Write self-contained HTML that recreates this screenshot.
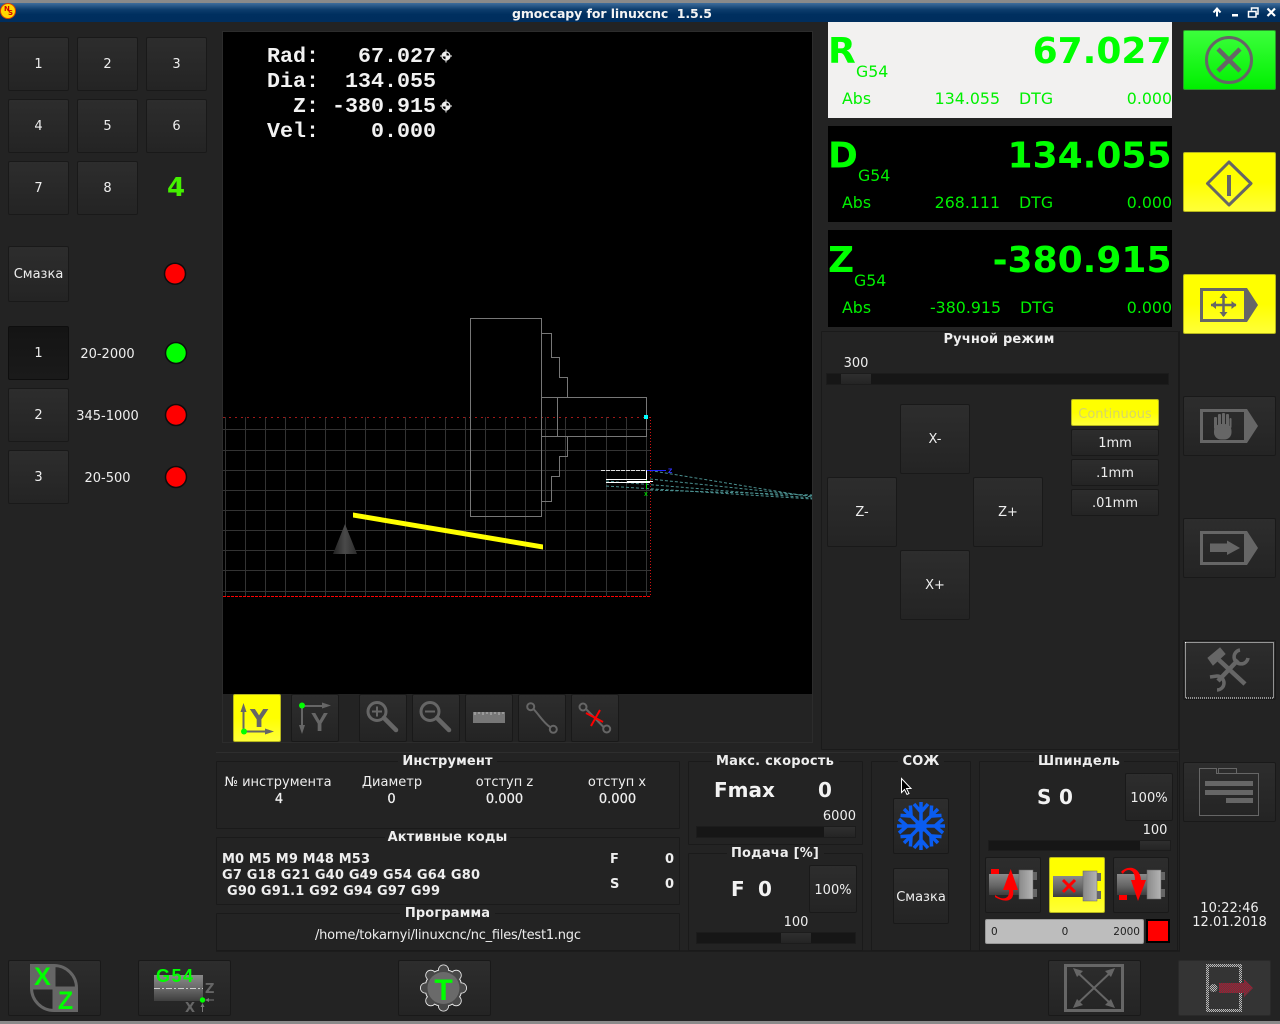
<!DOCTYPE html>
<html lang="ru"><head><meta charset="utf-8"><title>gmoccapy for linuxcnc</title>
<style>
html,body{margin:0;padding:0;background:#232323}
body{width:1280px;height:1024px;overflow:hidden;position:relative;font-family:"DejaVu Sans","Liberation Sans",sans-serif;font-size:13px;color:#eee}
.b{position:absolute;box-sizing:border-box;border:1px solid #191919;border-radius:2px;background:linear-gradient(#2d2d2d,#242424);display:flex;align-items:center;justify-content:center;color:#eee;font-size:13px}
.y{background:linear-gradient(#ffff00 50%,#ffff38);border:1px solid #b5b51e;color:#d6d66a}
.g{background:linear-gradient(#3cff3c,#00f000);border:1px solid #2a9a2a}
.f{position:absolute;box-sizing:border-box;border:1px solid #1a1a1a;border-radius:1px}
.tr{position:absolute;background:#161616;box-sizing:border-box;border:1px solid #1c1c1c}
.h{position:absolute;top:0;bottom:0;background:linear-gradient(#2f2f2f,#242424)}
.dro{position:absolute;left:828px;width:344px;background:#000}
svg{position:absolute;left:0;top:0;pointer-events:none}
.s{font-size:13px;fill:#eee}
.l{font-size:13px;font-weight:bold;fill:#eee;letter-spacing:.15px}
.d{font-size:15.8px;fill:#00f000}
.big{font-size:36px;font-weight:bold;fill:#00ff00}
.v{font-size:20px;font-weight:bold;fill:#f2f2f2}
.m{font-family:"Liberation Mono",monospace;font-size:21.67px;font-weight:bold;fill:#f2f2f2}
.p1{padding-top:2px}
.p2{padding-top:4px}
</style></head><body>
<div style="position:absolute;left:0;top:0;width:1280px;height:3px;background:#8a8a8a"></div>
<div style="position:absolute;left:0;top:3px;width:1280px;height:19px;background:linear-gradient(#3f6d9c,#0c3c6c 35%,#002f5f 60%,#002e5e)"></div>
<div style="position:absolute;left:0;top:1021px;width:1280px;height:3px;background:#8a8a8a"></div>
<div style="position:absolute;left:216px;top:950px;width:964px;height:2px;background:#1c1c1c"></div>
<div style="position:absolute;left:216px;top:752px;width:964px;height:1px;background:#2e2e2e"></div>
<div style="position:absolute;left:1179px;top:331px;width:1px;height:620px;background:#1a1a1a"></div>
<div style="position:absolute;left:222px;top:31px;width:591px;height:712px;box-sizing:border-box;border:1px solid #2c2c2c"></div>
<div style="position:absolute;left:223px;top:32px;width:589px;height:662px;background:#000"></div>

<div class="b" style="left:8px;top:37px;width:61px;height:54px">1</div>
<div class="b" style="left:77px;top:37px;width:61px;height:54px">2</div>
<div class="b" style="left:146px;top:37px;width:61px;height:54px">3</div>
<div class="b" style="left:8px;top:99px;width:61px;height:54px">4</div>
<div class="b" style="left:77px;top:99px;width:61px;height:54px">5</div>
<div class="b" style="left:146px;top:99px;width:61px;height:54px">6</div>
<div class="b" style="left:8px;top:161px;width:61px;height:54px">7</div>
<div class="b" style="left:77px;top:161px;width:61px;height:54px">8</div>
<div class="b" style="left:8px;top:246px;width:61px;height:56px">Смазка</div>
<div class="b" style="left:8px;top:326px;width:61px;height:54px;background:linear-gradient(#141414,#1a1a1a);border-color:#0e0e0e">1</div>
<div class="b" style="left:8px;top:388px;width:61px;height:54px">2</div>
<div class="b" style="left:8px;top:450px;width:61px;height:54px">3</div>

<div class="dro" style="top:22px;height:96px;background:#f2f1f0"></div>
<div class="dro" style="top:126px;height:96px"></div>
<div class="dro" style="top:230px;height:97px"></div>

<div class="b g" style="left:1183px;top:30px;width:93px;height:60px"></div>
<div class="b y" style="left:1183px;top:152px;width:93px;height:60px"></div>
<div class="b y" style="left:1183px;top:274px;width:93px;height:60px"></div>
<div class="b" style="left:1183px;top:396px;width:93px;height:60px"></div>
<div class="b" style="left:1183px;top:518px;width:93px;height:60px"></div>
<div class="b" style="left:1183px;top:640px;width:93px;height:60px"></div>
<div class="b" style="left:1183px;top:762px;width:93px;height:60px"></div>

<div class="f" style="left:821px;top:331px;width:358px;height:419px"></div>
<div class="tr" style="left:826px;top:373px;width:343px;height:12px"><div class="h" style="left:14px;width:30px"></div></div>
<div class="b" style="left:900px;top:404px;width:70px;height:70px">X-</div>
<div class="b" style="left:827px;top:477px;width:70px;height:70px">Z-</div>
<div class="b" style="left:973px;top:477px;width:70px;height:70px">Z+</div>
<div class="b" style="left:900px;top:550px;width:70px;height:70px">X+</div>
<div class="b y p2" style="left:1071px;top:399px;width:88px;height:27px">Continuous</div>
<div class="b p1" style="left:1071px;top:429px;width:88px;height:27px">1mm</div>
<div class="b p1" style="left:1071px;top:459px;width:88px;height:27px">.1mm</div>
<div class="b p1" style="left:1071px;top:489px;width:88px;height:27px">.01mm</div>

<div class="b y" style="left:233px;top:694px;width:48px;height:48px"></div>
<div class="b" style="left:291px;top:694px;width:48px;height:48px"></div>
<div class="b" style="left:359px;top:694px;width:48px;height:48px"></div>
<div class="b" style="left:412px;top:694px;width:48px;height:48px"></div>
<div class="b" style="left:465px;top:694px;width:48px;height:48px"></div>
<div class="b" style="left:518px;top:694px;width:48px;height:48px"></div>
<div class="b" style="left:571px;top:694px;width:48px;height:48px"></div>

<div class="f" style="left:216px;top:761px;width:464px;height:68px"></div>
<div class="f" style="left:216px;top:837px;width:464px;height:68px"></div>
<div class="f" style="left:216px;top:913px;width:464px;height:38px"></div>
<div class="f" style="left:688px;top:761px;width:175px;height:84px"></div>
<div class="f" style="left:688px;top:853px;width:175px;height:98px"></div>
<div class="f" style="left:871px;top:761px;width:100px;height:190px"></div>
<div class="f" style="left:979px;top:761px;width:199px;height:190px"></div>

<div class="tr" style="left:696px;top:826px;width:160px;height:12px"><div class="h" style="left:127px;width:31px"></div></div>
<div class="tr" style="left:696px;top:932px;width:160px;height:12px"><div class="h" style="left:84px;width:30px"></div></div>
<div class="tr" style="left:988px;top:840px;width:183px;height:11px"><div class="h" style="left:151px;width:30px"></div></div>

<div class="b p1" style="left:809px;top:865px;width:48px;height:48px">100%</div>
<div class="b p1" style="left:1125px;top:773px;width:48px;height:48px">100%</div>
<div class="b" style="left:893px;top:798px;width:56px;height:56px"></div>
<div class="b p1" style="left:893px;top:868px;width:56px;height:56px">Смазка</div>
<div class="b" style="left:985px;top:857px;width:56px;height:56px"></div>
<div class="b y" style="left:1049px;top:857px;width:56px;height:56px"></div>
<div class="b" style="left:1113px;top:857px;width:56px;height:56px"></div>
<div style="position:absolute;left:985px;top:919px;width:159px;height:25px;box-sizing:border-box;background:#bdbdbd;border:1px solid #999;border-radius:2px"></div>
<div style="position:absolute;left:1146px;top:919px;width:24px;height:24px;box-sizing:border-box;background:#f00;border:2px solid #000"></div>

<div class="b" style="left:8px;top:960px;width:93px;height:56px"></div>
<div class="b" style="left:138px;top:960px;width:93px;height:56px"></div>
<div class="b" style="left:398px;top:960px;width:93px;height:56px"></div>
<div class="b" style="left:1048px;top:960px;width:93px;height:56px"></div>
<div class="b" style="left:1178px;top:960px;width:93px;height:56px;background:#343434;border-color:#2a2a2a"></div>

<svg width="1280" height="1024" viewBox="0 0 1280 1024" font-family="'DejaVu Sans','Liberation Sans',sans-serif">
<defs>
<linearGradient id="cyl" x1="0" y1="0" x2="0" y2="1"><stop offset="0" stop-color="#8a8a8a"/><stop offset=".55" stop-color="#666"/><stop offset="1" stop-color="#3e3e3e"/></linearGradient>
<linearGradient id="col" x1="0" y1="0" x2="1" y2="0"><stop offset="0" stop-color="#8a8a8a"/><stop offset="1" stop-color="#b4b4b4"/></linearGradient>
<linearGradient id="cone" x1="0" y1="0" x2="1" y2="0"><stop offset="0" stop-color="#222"/><stop offset=".5" stop-color="#4a4a4a"/><stop offset="1" stop-color="#2c2c2c"/></linearGradient>
<pattern id="chk" width="2" height="2" patternUnits="userSpaceOnUse"><rect width="2" height="2" fill="#444"/><rect width="1" height="1" fill="#b8b8b8"/><rect x="1" y="1" width="1" height="1" fill="#b8b8b8"/></pattern>
<pattern id="chr" width="2" height="2" patternUnits="userSpaceOnUse"><rect width="2" height="2" fill="#4a4a4a"/><rect width="1" height="1" fill="#b80c28"/><rect x="1" y="1" width="1" height="1" fill="#b80c28"/></pattern>
</defs>

<!-- title bar -->
<circle cx="8" cy="11" r="7.5" fill="#ffd800" stroke="#e04000"/>
<text x="4" y="11" font-size="7" font-weight="bold" fill="#d00000">N</text><text x="8" y="15" font-size="7" font-weight="bold" fill="#d00000">S</text>
<text x="512" y="18" font-size="12.5" font-weight="bold" fill="#f4f4f4" xml:space="preserve" textLength="200">gmoccapy for linuxcnc  1.5.5</text>
<path d="M1217 16.5V9M1213.5 12.5l3.5-4 3.5 4" fill="none" stroke="#fff" stroke-width="2"/>
<rect x="1232" y="14" width="6" height="2.5" fill="#fff"/>
<path d="M1248.5 11.5h7.5v5.5h-7.5zM1251.5 10.500v-2.500h6.500v6h-2" fill="none" stroke="#fff" stroke-width="1.500"/>
<path d="M1267.500 8.500l7.500 7.500M1275 8.500l-7.500 7.500" stroke="#fff" stroke-width="2.200"/>

<!-- left panel -->
<text x="176" y="196" text-anchor="middle" font-size="26" font-weight="bold" fill="#44f000">4</text>
<circle cx="175" cy="273.700" r="10.500" fill="#f00" stroke="#0c0c0c" stroke-width="1.500"/>
<circle cx="176" cy="353" r="10.500" fill="#0f0" stroke="#0c0c0c" stroke-width="1.500"/>
<circle cx="176" cy="415" r="10.500" fill="#f00" stroke="#0c0c0c" stroke-width="1.500"/>
<circle cx="176" cy="477" r="10.500" fill="#f00" stroke="#0c0c0c" stroke-width="1.500"/>
<text class="s" x="107.500" y="358" text-anchor="middle">20-2000</text>
<text class="s" x="107.500" y="420" text-anchor="middle">345-1000</text>
<text class="s" x="107.500" y="482" text-anchor="middle">20-500</text>

<!-- preview -->
<text class="m" x="267" y="62" xml:space="preserve">Rad:   67.027</text>
<text class="m" x="267" y="87" xml:space="preserve">Dia:  134.055</text>
<text class="m" x="267" y="112" xml:space="preserve">  Z: -380.915</text>
<text class="m" x="267" y="137" xml:space="preserve">Vel:    0.000</text>
<g fill="#eee" stroke="none">
<circle cx="446" cy="56" r="4" fill="none" stroke="#eee" stroke-width="1.200"/><path d="M446 56V52A4 4 0 0 0 442 56ZM446 56V60A4 4 0 0 0 450 56Z"/><path d="M445.500 49.500h1v13h-1zM440 55.500h12v1h-12z"/>
<circle cx="446" cy="106" r="4" fill="none" stroke="#eee" stroke-width="1.200"/><path d="M446 106V102A4 4 0 0 0 442 106ZM446 106V110A4 4 0 0 0 450 106Z"/><path d="M445.500 99.500h1v13h-1zM440 105.500h12v1h-12z"/>
</g>
<g shape-rendering="crispEdges" stroke="#333" fill="none">
<path d="M223 429.500H650M223 450.500H650M223 470.500H650M223 490.500H650M223 510.500H650M223 530.500H650M223 550.500H650M223 570.500H650M223 591.500H650"/>
<path d="M225.500 417V596M245.500 417V596M265.500 417V596M285.500 417V596M305.500 417V596M325.500 417V596M345.500 417V596M365.500 417V596M385.500 417V596M405.500 417V596M425.500 417V596M445.500 417V596M465.500 417V596M485.500 417V596M505.500 417V596M525.500 417V596M545.500 417V596M565.500 417V596M585.500 417V596M606.500 417V596M626.500 417V596M646.500 417V596"/>
</g>
<g shape-rendering="crispEdges" fill="none">
<path d="M223 417.500H650" stroke="#a01818" stroke-dasharray="2 4"/>
<path d="M650.500 417V596" stroke="#d01010" stroke-dasharray="1 2"/>
<path d="M223 596.500H650" stroke="#f00" stroke-dasharray="3 1"/>
<g stroke="#777">
<rect x="470.500" y="318.500" width="71" height="198"/>
<path d="M541.500 333.500H551.500V357.500H559.500V377.500H567.500V397.500M541.500 397.500H646.500V436.500H541.500M557.500 397.500V436.500M567.500 436.500V456.500H559.500V476.500H551.500V501.500H541.500"/>
</g>
</g>
<polygon points="345,524 333,554 357,554" fill="url(#cone)"/>
<polygon points="353,512.500 543,544.500 543,549.500 353,517.500" fill="#ff0"/>
<g fill="none" stroke="#4a8f8f" stroke-dasharray="3 2">
<path d="M650 470.500L812 497"/><path d="M606 486L812 499"/><path d="M650 490L812 495"/><path d="M606 481L812 498"/><path d="M650 479L812 496"/>
</g>
<g shape-rendering="crispEdges">
<path d="M601 470.500H647" stroke="#ddd" stroke-dasharray="4 1" fill="none"/>
<path d="M647 470.500H666" stroke="#22f" fill="none"/>
<path d="M646.500 471V480" stroke="#fff" fill="none"/>
<path d="M646.500 480V489" stroke="#0c0" fill="none"/>
<path d="M606 479.500H647M606 482.500H650M627 481.500H653" stroke="#fff" fill="none"/>
<rect x="644" y="415" width="4" height="4" fill="#0ff"/>
</g>
<text x="668" y="473" font-size="6" font-weight="bold" fill="#33f">Z</text>
<text x="644" y="496" font-size="5" font-weight="bold" fill="#0c0">X</text>

<!-- DRO -->
<text class="big" x="828" y="63">R</text>
<text class="d" x="856" y="77">G54</text>
<text class="big" x="1171.500" y="63" text-anchor="end">67.027</text>
<text class="d" x="842" y="104">Abs</text><text class="d" x="1000" y="104" text-anchor="end">134.055</text><text class="d" x="1019" y="104">DTG</text><text class="d" x="1172" y="104" text-anchor="end">0.000</text>
<text class="big" x="828" y="167.500">D</text>
<text class="d" x="858" y="181">G54</text>
<text class="big" x="1171.500" y="167.500" text-anchor="end">134.055</text>
<text class="d" x="842" y="208">Abs</text><text class="d" x="1000" y="208" text-anchor="end">268.111</text><text class="d" x="1019" y="208">DTG</text><text class="d" x="1172" y="208" text-anchor="end">0.000</text>
<text class="big" x="828" y="272">Z</text>
<text class="d" x="854" y="286">G54</text>
<text class="big" x="1171.500" y="272" text-anchor="end">-380.915</text>
<text class="d" x="842" y="313">Abs</text><text class="d" x="1001" y="313" text-anchor="end">-380.915</text><text class="d" x="1020" y="313">DTG</text><text class="d" x="1172" y="313" text-anchor="end">0.000</text>

<!-- right side icons -->
<circle cx="1229" cy="60" r="22.500" fill="none" stroke="#666" stroke-width="3"/>
<path d="M1218 49L1240 71M1240 49L1218 71" stroke="#666" stroke-width="4.500"/>
<path d="M1229 162L1251 183.500L1229 205L1207.500 183.500Z" fill="none" stroke="#666" stroke-width="3" stroke-linejoin="round"/>
<rect x="1227" y="175" width="4" height="21" fill="#666"/>
<g fill="#666">
<rect x="1201.500" y="289.500" width="44" height="31" fill="none" stroke="#666" stroke-width="3"/>
<polygon points="1244,288 1247,288 1258,305 1247,322 1244,322"/>
<path d="M1211 305h25M1223.500 294v22" stroke="#666" stroke-width="2.500"/>
<path d="M1211 305l5-4v8zM1236.500 305l-5-4v8zM1223.500 293l-4 5h8zM1223.500 317l-4-5h8z"/>
</g>
<g fill="#666">
<rect x="1201.500" y="410.500" width="44" height="31" fill="none" stroke="#666" stroke-width="3"/>
<polygon points="1244,409 1247,409 1258,426 1247,443 1244,443"/>
<rect x="1214" y="424" width="17.500" height="15.500" rx="7"/>
<rect x="1214" y="417" width="3" height="12" rx="1"/>
<rect x="1218" y="414" width="3" height="14" rx="1"/>
<rect x="1222" y="413" width="3" height="15" rx="1"/>
<rect x="1226" y="414" width="3" height="14" rx="1"/>
<rect x="1229.500" y="418" width="2" height="10" rx="1"/>
</g>
<g fill="#666">
<rect x="1201.500" y="532.500" width="44" height="31" fill="none" stroke="#666" stroke-width="3"/>
<polygon points="1244,531 1247,531 1258,548 1247,565 1244,565"/>
<path d="M1210 543.500h17v-3l13 7.500-13 7v-3h-17z"/>
</g>
<rect x="1185.500" y="642.500" width="88" height="55.500" fill="none" stroke="#fff" stroke-dasharray="1 1" shape-rendering="crispEdges"/>
<g fill="none" stroke="#666" stroke-width="4.500">
<path d="M1219 660L1245 684"/><path d="M1238 660L1218 681"/>
<path d="M1208 658L1220 648L1225 654L1213 665Z" fill="#666" stroke-width="1"/>
<path d="M1240 650a7 7 0 1 0 8 8" stroke-width="3.500"/>
<path d="M1217 690a7 7 0 0 0 0-14l-7 1" stroke-width="3.500"/>
</g>
<g fill="none" stroke="#666" stroke-width="1">
<path d="M1199.500 815.500V768.500H1216.500V773.500H1258.500V815.500Z"/>
<path d="M1218.500 773V768.500H1236.500V773"/>
</g>
<g fill="#666"><rect x="1205" y="781" width="48" height="5"/><rect x="1205" y="790" width="48" height="5"/><rect x="1226" y="798" width="27" height="5"/></g>

<!-- jog -->
<text class="l" x="999" y="343" text-anchor="middle">Ручной режим</text>
<text class="s" x="856" y="367" text-anchor="middle">300</text>

<!-- view toolbar -->
<g fill="#666" stroke="#666">
<path d="M243.500 707V731.500H270" fill="none" stroke-width="2"/><path d="M243.500 703l-3 9h6zM274 731.500l-9-3v6z" stroke="none"/>
<path d="M301.500 706H327M302 706V730" fill="none" stroke-width="2"/><path d="M331 705.500l-9-3v6zM302 734l-3-9h6z" stroke="none"/>
<g fill="none" stroke-width="3">
<circle cx="377" cy="711.500" r="9"/><path d="M384 718L396 730" stroke-width="4.500" stroke-linecap="round"/><path d="M372 711.500h10M377 706.500v10" stroke-width="2"/>
<circle cx="430" cy="711.500" r="9"/><path d="M437 718L449 730" stroke-width="4.500" stroke-linecap="round"/><path d="M425 711.500h10" stroke-width="2"/>
</g>
<rect x="473" y="712" width="32" height="11" fill="#777" stroke="none"/>
<path d="M475 712v3M479 712v2M483 712v3M487 712v2M491 712v3M495 712v2M499 712v3M503 712v2" stroke="#bbb"/>
<g fill="none" stroke-width="2">
<circle cx="530.700" cy="706.700" r="3.500"/><circle cx="553.300" cy="729.300" r="3.500"/><path d="M533.500 709C540 716 543 722 550 727"/>
<circle cx="583" cy="707" r="3.500"/><circle cx="606.700" cy="729" r="3.500"/><path d="M586 709L603.500 727"/>
</g>
</g>
<text x="259" y="727" text-anchor="middle" font-size="25" font-weight="bold" fill="#666">Y</text>
<text x="319.500" y="731" text-anchor="middle" font-family="'Liberation Sans',sans-serif" font-size="26" font-weight="bold" fill="#666">Y</text>
<circle cx="244" cy="731.500" r="3" fill="#0f0"/><circle cx="302" cy="705.500" r="3" fill="#0f0"/>
<path d="M586 713L603 722M600 710L591 726" stroke="#f00" stroke-width="2"/>

<!-- info frames -->
<rect x="398" y="755" width="99" height="10" fill="#232323"/><rect x="385" y="831" width="125" height="10" fill="#232323"/><rect x="400" y="907" width="95" height="10" fill="#232323"/>
<rect x="712" y="755" width="127" height="10" fill="#232323"/><rect x="727" y="847" width="97" height="10" fill="#232323"/><rect x="898" y="755" width="46" height="10" fill="#232323"/><rect x="1034" y="755" width="90" height="10" fill="#232323"/>
<text class="l" x="447.500" y="765" text-anchor="middle">Инструмент</text>
<text class="s" x="278" y="786" text-anchor="middle">№ инструмента</text><text class="s" x="392" y="786" text-anchor="middle">Диаметр</text><text class="s" x="504.500" y="786" text-anchor="middle">отступ z</text><text class="s" x="617" y="786" text-anchor="middle">отступ x</text>
<g font-size="13" font-weight="500" fill="#eee" text-anchor="middle" stroke="#eee" stroke-width=".25"><text x="279" y="803">4</text><text x="391.500" y="803">0</text><text x="504.500" y="803">0.000</text><text x="617.500" y="803">0.000</text></g>
<text class="l" x="447.500" y="841" text-anchor="middle">Активные коды</text>
<g font-size="13" font-weight="bold" fill="#eee"><text x="222" y="863" textLength="148">M0 M5 M9 M48 M53</text><text x="222" y="879" textLength="258">G7 G18 G21 G40 G49 G54 G64 G80</text><text x="227" y="895" textLength="213">G90 G91.1 G92 G94 G97 G99</text>
<text x="610" y="863">F</text><text x="610" y="888">S</text><text x="665" y="863">0</text><text x="665" y="888">0</text></g>
<text class="l" x="447.500" y="917" text-anchor="middle">Программа</text>
<text class="s" x="315" y="939" textLength="266">/home/tokarnyi/linuxcnc/nc_files/test1.ngc</text>
<text class="l" x="775" y="765" text-anchor="middle" textLength="118">Макс. скорость</text>
<text class="v" x="714" y="797">Fmax</text><text class="v" x="818" y="797">0</text>
<text class="s" x="856" y="820" text-anchor="end">6000</text>
<text class="l" x="775" y="857" text-anchor="middle" textLength="88">Подача [%]</text>
<text class="v" x="731" y="896">F</text><text class="v" x="758" y="896">0</text>
<text class="s" x="796" y="926" text-anchor="middle">100</text>
<text class="l" x="921" y="765" text-anchor="middle">СОЖ</text>
<text class="l" x="1079" y="765" text-anchor="middle" textLength="82">Шпиндель</text>
<text class="v" x="1037" y="804">S</text><text class="v" x="1059" y="804">0</text>
<text class="s" x="1155" y="834" text-anchor="middle">100</text>
<g font-size="10.500" fill="#222"><text x="991" y="935">0</text><text x="1065" y="935" text-anchor="middle">0</text><text x="1140" y="935" text-anchor="end">2000</text></g>
<text class="s" x="1229.500" y="912" text-anchor="middle">10:22:46</text>
<text class="s" x="1229.500" y="926" text-anchor="middle">12.01.2018</text>

<!-- snowflake -->
<g transform="translate(921 826)" fill="none" stroke="#0a5cf0" stroke-width="3.500">
<circle r="6" fill="#0a5cf0" stroke="none"/>
<path d="M0 0V-24M-7 -22L0 -14L7 -22"/>
<path transform="rotate(45)" d="M0 0V-24M-7 -22L0 -14L7 -22"/><path transform="rotate(90)" d="M0 0V-24M-7 -22L0 -14L7 -22"/><path transform="rotate(135)" d="M0 0V-24M-7 -22L0 -14L7 -22"/><path transform="rotate(180)" d="M0 0V-24M-7 -22L0 -14L7 -22"/><path transform="rotate(225)" d="M0 0V-24M-7 -22L0 -14L7 -22"/><path transform="rotate(270)" d="M0 0V-24M-7 -22L0 -14L7 -22"/><path transform="rotate(315)" d="M0 0V-24M-7 -22L0 -14L7 -22"/>
</g>

<!-- spindle icons -->
<g>
<rect x="989" y="874" width="30" height="21" fill="url(#cyl)"/><rect x="1019" y="870" width="14" height="29" fill="url(#col)" stroke="#666" stroke-width=".5"/><rect x="1033" y="872" width="4" height="8" fill="#666"/><rect x="1033" y="889" width="4" height="8" fill="#666"/>
<rect x="991" y="869" width="8" height="5" fill="#f00"/>
<path d="M995 895C1003 901 1010 899 1009 890H1003L1010.700 869L1018 890H1013C1015 902 1005 903 995 897Z" fill="#f00"/>
<rect x="1053" y="876" width="30" height="21" fill="url(#cyl)"/><rect x="1083" y="871" width="14" height="30" fill="url(#col)" stroke="#666" stroke-width=".5"/><rect x="1097" y="873" width="4" height="8" fill="#666"/><rect x="1097" y="891" width="4" height="8" fill="#666"/>
<path d="M1063 880L1075 892M1075 880L1063 892" stroke="#f00" stroke-width="3"/>
<rect x="1117" y="874" width="30" height="21" fill="url(#cyl)"/><rect x="1147" y="870" width="14" height="29" fill="url(#col)" stroke="#666" stroke-width=".5"/><rect x="1161" y="872" width="4" height="8" fill="#666"/><rect x="1161" y="889" width="4" height="8" fill="#666"/>
<rect x="1119" y="895" width="8" height="5" fill="#f00"/>
<path d="M1123 874C1126 868 1135 868 1135 880H1131L1138 901L1146 880H1141C1140 866 1127 865 1121 872Z" fill="#f00"/>
</g>

<!-- bottom icons -->
<path d="M30 964H54V988H30ZM54 988H78V1012H54Z" fill="#666"/>
<path d="M54 965.500A22.500 22.500 0 0 1 76.500 988H54ZM31.500 988H54V1010.500A22.500 22.500 0 0 1 31.500 988Z" fill="none" stroke="#666" stroke-width="3"/>
<text x="42.500" y="985" text-anchor="middle" font-family="'Liberation Sans',sans-serif" font-size="25" font-weight="bold" fill="#0f0">X</text>
<text x="65.500" y="1009" text-anchor="middle" font-family="'Liberation Sans',sans-serif" font-size="25" font-weight="bold" fill="#0f0">Z</text>

<rect x="154" y="975" width="49" height="26" fill="url(#cyl)"/>
<path d="M154 988.500H203" stroke="#ccc" stroke-dasharray="6 2 2 2"/>
<text x="156" y="982" font-family="'Liberation Sans',sans-serif" font-size="18" font-weight="bold" fill="#0f0" textLength="37">G54</text>
<text x="205" y="993" font-size="13" font-weight="bold" fill="#666">Z</text>
<text x="185" y="1012" font-size="13" font-weight="bold" fill="#666">X</text>
<circle cx="202.500" cy="1000" r="2.700" fill="#0f0"/>
<path d="M214 1000H206M202.500 1012V1005" stroke="#777"/><path d="M205 1000l4-2v4zM202.500 1003l-2 4h4z" fill="#777"/>

<g transform="translate(443.500 988)">
<g fill="#eee"><circle cx="18" cy="0" r="5.500"/><circle cx="12.700" cy="12.700" r="5.500"/><circle cx="0" cy="18" r="5.500"/><circle cx="-12.700" cy="12.700" r="5.500"/><circle cx="-18" cy="0" r="5.500"/><circle cx="-12.700" cy="-12.700" r="5.500"/><circle cx="0" cy="-18" r="5.500"/><circle cx="12.700" cy="-12.700" r="5.500"/><circle r="19"/></g>
<g fill="#484848"><circle cx="18" cy="0" r="4.700"/><circle cx="12.700" cy="12.700" r="4.700"/><circle cx="0" cy="18" r="4.700"/><circle cx="-12.700" cy="12.700" r="4.700"/><circle cx="-18" cy="0" r="4.700"/><circle cx="-12.700" cy="-12.700" r="4.700"/><circle cx="0" cy="-18" r="4.700"/><circle cx="12.700" cy="-12.700" r="4.700"/><circle r="18"/></g>
<circle r="16" fill="#6a6a6a"/>
</g>
<text x="443.500" y="1000" text-anchor="middle" font-family="'Liberation Sans',sans-serif" font-size="30" font-weight="bold" fill="#0f0">T</text>

<rect x="1065.500" y="965.500" width="57" height="45" fill="none" stroke="#666" stroke-width="3"/>
<path d="M1076 971L1112 1005M1112 971L1076 1005" stroke="#666" stroke-width="2"/>
<path d="M1073 968l10 3-6 6zM1115 968l-10 3 6 6zM1073 1008l10-3-6-6zM1115 1008l-10-3 6-6z" fill="#666"/>

<rect x="1207.500" y="965.500" width="33" height="45" fill="none" stroke="url(#chk)" stroke-width="3"/>
<circle cx="1213.500" cy="988" r="4" fill="url(#chk)"/>
<path d="M1219 983H1244V979L1253 988L1244 997V993H1219Z" fill="url(#chr)"/>

<!-- mouse cursor -->
<path d="M901.500 778.500V792.500L904.500 789.500L907 794.500L909 793.500L906.500 788.500L911 788.500Z" fill="#000" stroke="#fff" stroke-width="1"/>
</svg>
</body></html>
